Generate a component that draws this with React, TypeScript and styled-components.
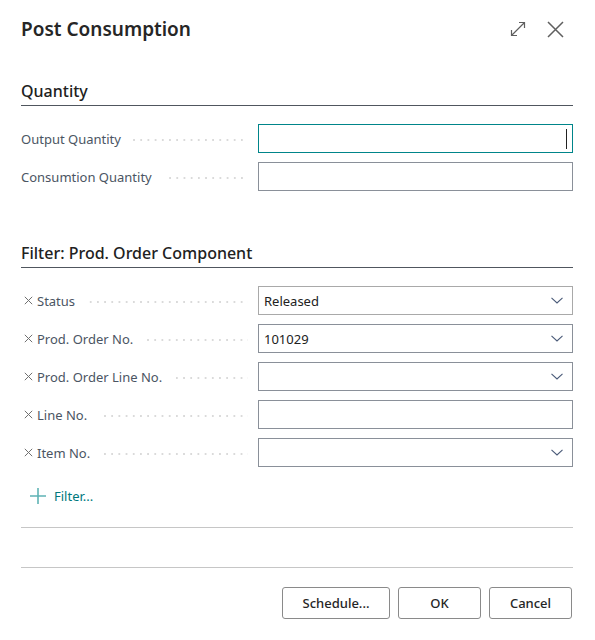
import React from "react";
import styled, { createGlobalStyle } from "styled-components";

const Global = createGlobalStyle`
  html, body { margin: 0; padding: 0; background: #ffffff; }
  body { font-family: "Noto Sans", "Open Sans", sans-serif; }
  * { box-sizing: border-box; }
`;

const Dialog = styled.div`
  width: 595px;
  height: 640px;
  padding: 0 22px 0 21px;
  display: flex;
  flex-direction: column;
  background: #fff;
`;

const Header = styled.div`
  height: 58px;
  display: flex;
  align-items: center;
  justify-content: space-between;
`;

const Title = styled.h1`
  margin: 0;
  font-size: 19px;
  font-weight: 600;
  color: #262626;
  letter-spacing: 0;
`;

const HeaderIcons = styled.div`
  display: flex;
  align-items: center;
  gap: 19px;
  margin-right: 9px;
`;

const IconButton = styled.span`
  display: inline-flex;
  width: 18px;
  height: 18px;
  align-items: center;
  justify-content: center;
  color: #5a5a5a;
`;

const Heading = styled.div<{ $top: number }>`
  margin-top: ${(p) => p.$top}px;
  height: 28px;
  display: flex;
  align-items: center;
  border-bottom: 1px solid #50565e;
  font-size: 16px;
  font-weight: 550;
  color: #212121;
  padding-bottom: 1px;
`;

const Rows = styled.div`
  margin-top: 18px;
  display: flex;
  flex-direction: column;
  gap: 9px;
`;

const Row = styled.div`
  display: grid;
  grid-template-columns: 237px 1fr;
  height: 29px;
  align-items: center;
`;

const LabelCell = styled.div`
  display: flex;
  align-items: center;
  padding-right: 10px;
  height: 100%;
`;

const Remove = styled.span`
  display: inline-flex;
  width: 13px;
  margin-left: 3px;
  color: #6e6e6e;
`;

const LabelText = styled.span`
  font-size: 13px;
  color: #4b5563;
  white-space: nowrap;
  padding-top: 1px;
`;

const Leader = styled.span`
  flex: 1;
  height: 2px;
  margin: 3px 0 0 12px;
  background-image: linear-gradient(to right, #dadada 2px, transparent 2px);
  background-size: 7.2px 2px;
  background-repeat: repeat-x;
  background-position: right center;
`;

const Field = styled.div<{ $focus?: boolean; $light?: boolean }>`
  height: 29px;
  display: flex;
  align-items: center;
  justify-content: space-between;
  border: 1px solid
    ${(p) => (p.$focus ? "#00858a" : p.$light ? "#a9a9a9" : "#8a9099")};
  background: #fff;
  padding: 0 9px 0 5px;
  font-size: 13px;
  color: #212121;
`;

const Caret = styled.span`
  width: 1px;
  height: 20px;
  background: #222;
  margin-right: -4px;
`;

const AddFilter = styled.div`
  margin-top: 19px;
  margin-left: 9px;
  height: 20px;
  display: flex;
  align-items: center;
  gap: 8px;
  color: #00787d;
  font-size: 13px;
`;

const Separator = styled.div<{ $top: number }>`
  margin-top: ${(p) => p.$top}px;
  height: 1px;
  background: #c6c6c6;
`;

const Footer = styled.div`
  margin-top: 19px;
  display: flex;
  justify-content: flex-end;
  gap: 8px;
  padding-right: 1px;
`;

const Button = styled.button<{ $w: number }>`
  width: ${(p) => p.$w}px;
  height: 32px;
  border: 1px solid #8a8a8a;
  border-radius: 3px;
  background: #fff;
  font-family: "Noto Sans", "Open Sans", sans-serif;
  font-size: 13px;
  font-weight: 500;
  color: #262626;
  padding: 0;
`;

const Chevron = () => (
  <svg width="12" height="7" viewBox="0 0 12 7" fill="none">
    <path d="M0.5 0.8 L6 6 L11.5 0.8" stroke="#4a5a78" strokeWidth="1.1" />
  </svg>
);

const XMark = () => (
  <svg width="9" height="9" viewBox="0 0 9 9" fill="none">
    <path d="M0.8 0.8 L8.2 8.2 M8.2 0.8 L0.8 8.2" stroke="#707070" strokeWidth="1" />
  </svg>
);

type FieldRow = {
  label: string;
  value?: string;
  dropdown?: boolean;
  removable?: boolean;
  focus?: boolean;
  light?: boolean;
};

const FormRow = ({ r }: { r: FieldRow }) => (
  <Row>
    <LabelCell>
      {r.removable && (
        <Remove>
          <XMark />
        </Remove>
      )}
      <LabelText>{r.label}</LabelText>
      <Leader />
    </LabelCell>
    <Field $focus={r.focus} $light={r.light}>
      <span>{r.value ?? ""}</span>
      {r.dropdown && <Chevron />}
      {r.focus && <Caret />}
    </Field>
  </Row>
);

const quantityRows: FieldRow[] = [
  { label: "Output Quantity", focus: true },
  { label: "Consumtion Quantity" },
];

const filterRows: FieldRow[] = [
  { label: "Status", value: "Released", dropdown: true, removable: true, light: true },
  { label: "Prod. Order No.", value: "101029", dropdown: true, removable: true },
  { label: "Prod. Order Line No.", dropdown: true, removable: true },
  { label: "Line No.", removable: true },
  { label: "Item No.", dropdown: true, removable: true },
];

export default function App() {
  return (
    <>
      <Global />
      <Dialog>
        <Header>
          <Title>Post Consumption</Title>
          <HeaderIcons>
            <IconButton>
              <svg width="16" height="16" viewBox="0 0 16 16" fill="none">
                <path
                  d="M1.5 14.5 L14.5 1.5 M9 1.5 H14.5 V7 M1.5 9 V14.5 H7"
                  stroke="#5f5f5f"
                  strokeWidth="1.2"
                />
              </svg>
            </IconButton>
            <IconButton>
              <svg width="17" height="17" viewBox="0 0 17 17" fill="none">
                <path d="M1 1 L16 16 M16 1 L1 16" stroke="#5f5f5f" strokeWidth="1.5" />
              </svg>
            </IconButton>
          </HeaderIcons>
        </Header>

        <Heading $top={20}>Quantity</Heading>
        <Rows>
          {quantityRows.map((r) => (
            <FormRow key={r.label} r={r} />
          ))}
        </Rows>

        <Heading $top={49}>Filter: Prod. Order Component</Heading>
        <Rows>
          {filterRows.map((r) => (
            <FormRow key={r.label} r={r} />
          ))}
        </Rows>

        <AddFilter>
          <svg width="16" height="16" viewBox="0 0 16 16" fill="none">
            <path d="M8 0 V16 M0 8 H16" stroke="#5fb3b5" strokeWidth="1.6" />
          </svg>
          <span>Filter...</span>
        </AddFilter>

        <Separator $top={21} />
        <Separator $top={39} />

        <Footer>
          <Button $w={108}>Schedule...</Button>
          <Button $w={83}>OK</Button>
          <Button $w={83}>Cancel</Button>
        </Footer>
      </Dialog>
    </>
  );
}
